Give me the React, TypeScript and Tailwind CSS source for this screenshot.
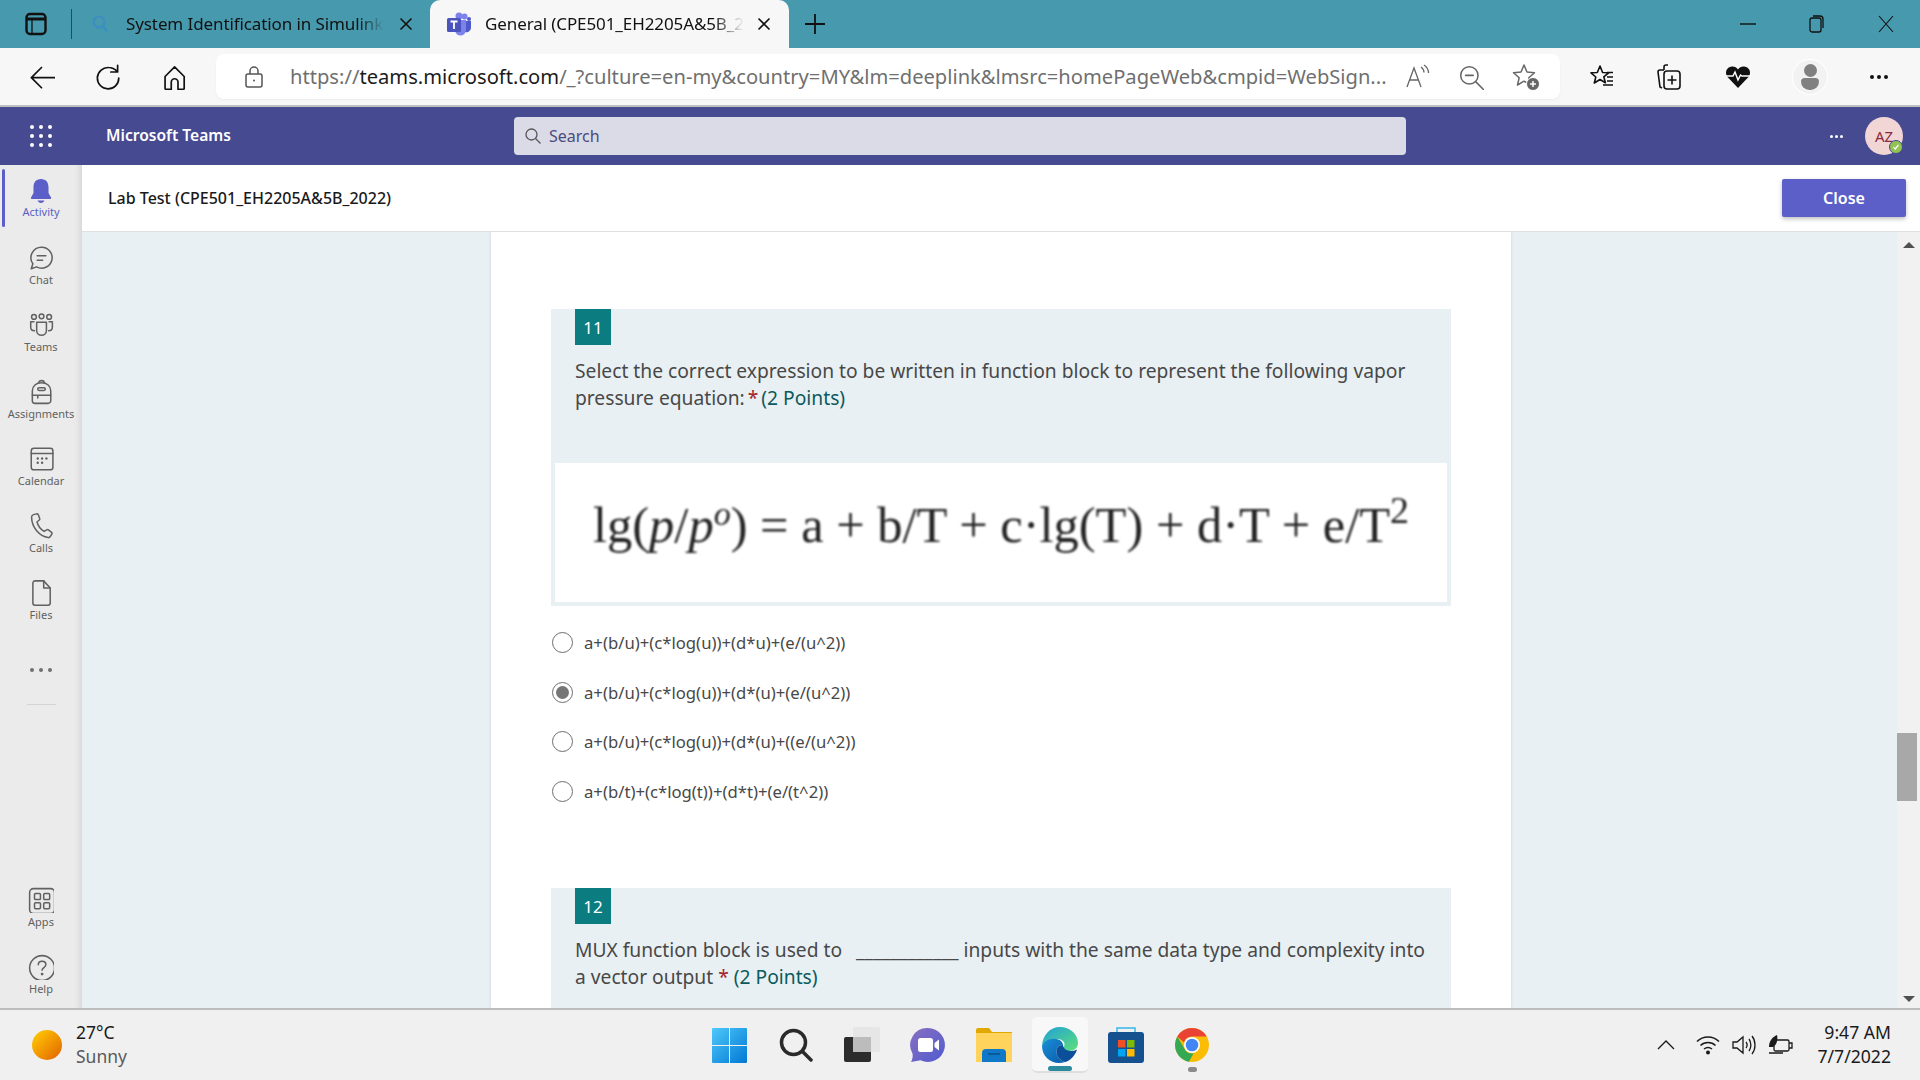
import React from 'react';

const ui = 'font-["Noto_Sans",sans-serif]';

function Ico({ s = 24, children, className = '', vb = 24 }: { s?: number; children: React.ReactNode; className?: string; vb?: number }) {
  return (
    <svg width={s} height={s} viewBox={`0 0 ${vb} ${vb}`} fill="none" stroke="currentColor" strokeWidth="1.4" strokeLinecap="round" strokeLinejoin="round" className={className}>
      {children}
    </svg>
  );
}

const railIcons: Record<string, React.ReactNode> = {
  Activity: (
    <svg width="24" height="26" viewBox="0 0 24 26" fill="#5b5fc7">
      <path d="M12 1c-5 0-7.500 3.600-7.500 8v6L2 19.500c-.4.800.1 1.500 1 1.500h18c.9 0 1.400-.7 1-1.500L19.500 15V9c0-4.400-2.500-8-7.500-8z" />
      <path d="M8.500 22.500h7c-.6 1.500-2 2.500-3.500 2.500s-2.900-1-3.500-2.500z" />
    </svg>
  ),
  Chat: (
    <Ico s={26}>
      <path d="M12.500 2a9.700 9.700 0 1 1-4.600 18.200L3 22l1.500-4.700A9.700 9.700 0 0 1 12.500 2z" />
      <path d="M8.500 10h8M8.500 14h5" />
    </Ico>
  ),
  Teams: (
    <Ico s={26}>
      <circle cx="5.500" cy="4.500" r="2.200" />
      <circle cx="12.500" cy="4" r="2.200" />
      <circle cx="19.500" cy="4.500" r="2.200" />
      <path d="M8 9.500h9v7.500a4.500 4.500 0 0 1-9 0z" />
      <path d="M5.500 9H2.500v5c0 2 1.300 3.200 3.500 3.200M19.500 9h3v5c0 2-1.300 3.200-3.500 3.200" />
    </Ico>
  ),
  Assignments: (
    <Ico s={26}>
      <path d="M10 3.500c0-1.300 1-2 2.500-2s2.500.7 2.500 2" />
      <path d="M4 11c0-4.500 3.500-7.500 8.500-7.500S21 6.500 21 11v9a2.500 2.500 0 0 1-2.500 2.500h-12A2.500 2.500 0 0 1 4 20z" />
      <rect x="9" y="8" width="7" height="2.600" rx="1.300" />
      <path d="M4 15h17M9 15v2.500" />
    </Ico>
  ),
  Calendar: (
    <Ico s={26}>
      <rect x="3" y="2" width="20" height="20" rx="2.500" />
      <path d="M3 7h20" />
      <g fill="currentColor" stroke="none">
        <circle cx="9" cy="11.500" r="1.100" /><circle cx="13" cy="11.500" r="1.100" /><circle cx="17" cy="11.500" r="1.100" />
        <circle cx="9" cy="15.500" r="1.100" /><circle cx="13" cy="15.500" r="1.100" />
      </g>
    </Ico>
  ),
  Calls: (
    <Ico s={26}>
      <path d="M5 1.500 8 .8c.7-.1 1.200.2 1.500.9l1.300 3.300c.2.600 0 1.100-.4 1.500L8.300 8.300c.9 3.300 3.300 6.700 6.500 8.700l2.500-1.500c.5-.3 1.100-.3 1.600.1l2.800 2.300c.5.400.6 1 .3 1.500l-1.500 2.400c-.4.700-1.100 1-1.900.9C10.500 21.500 3.500 13.500 3.300 4c0-1.200.6-2.200 1.700-2.500z" />
    </Ico>
  ),
  Files: (
    <Ico s={26}>
      <path d="M6.500 0.800h8l6 6.500v14a2 2 0 0 1-2 2h-12a2 2 0 0 1-2-2v-18.500a2 2 0 0 1 2-2z" />
      <path d="M14.500 0.800v6.500h6" />
    </Ico>
  ),
  Apps: (
    <Ico s={26}>
      <rect x="1.500" y="1.500" width="23" height="23" rx="3.500" />
      <rect x="6" y="6" width="5.500" height="5.500" rx="1" /><rect x="14.500" y="6" width="5.500" height="5.500" rx="1" />
      <rect x="6" y="14.500" width="5.500" height="5.500" rx="1" /><rect x="14.500" y="14.500" width="5.500" height="5.500" rx="1" />
    </Ico>
  ),
  Help: (
    <Ico s={26}>
      <circle cx="13" cy="13" r="11.500" />
      <path d="M9.500 10c0-2 1.500-3.300 3.500-3.300s3.500 1.300 3.500 3.100c0 2.700-3.500 2.700-3.500 5.200" />
      <circle cx="13" cy="18.500" r=".6" fill="currentColor" />
    </Ico>
  ),
};

function RailItem({ name, active }: { name: string; active?: boolean }) {
  return (
    <div className={`relative h-[67px] flex flex-col items-center pt-[13px] ${active ? 'text-[#5b5fc7]' : 'text-[#616161]'}`}>
      {active && <span className="absolute left-[2px] top-[4px] h-[58px] w-[3px] rounded-full bg-[#5b5fc7]" />}
      <div className="h-[26px] flex items-center justify-center">{railIcons[name]}</div>
      <span className={`text-[11px] leading-[14px] ${active ? 'mt-[1px]' : 'mt-[2px]'}`}>{name}</span>
    </div>
  );
}

function TabClose() {
  return (
    <svg width="14" height="14" viewBox="0 0 14 14" stroke="#111" strokeWidth="1.6" className="shrink-0">
      <path d="M1.500 1.500l11 11M12.500 1.500l-11 11" />
    </svg>
  );
}

function TabBar() {
  return (
    <div className="h-12 bg-[#479aae] flex items-stretch text-[#111]">
      <div className="w-[71px] flex items-center justify-center">
        <svg width="22" height="24" viewBox="0 0 22 24" fill="none" stroke="#111" strokeWidth="2.400">
          <rect x="1.500" y="2" width="19" height="20" rx="3.500" />
          <path d="M1.500 7h19" strokeWidth="3" />
          <path d="M7 7v15" strokeWidth="1.300" />
        </svg>
      </div>
      <div className="w-px h-[30px] self-center bg-[#1f4f5a]" />
      <div className="w-[358px] flex items-center pl-[19px]">
        <svg width="18" height="20" viewBox="0 0 18 20" fill="none" stroke="#3a8fc0" strokeWidth="2.200" className="shrink-0">
          <circle cx="8" cy="8" r="5.500" /><path d="M12 12.500l4 5" />
        </svg>
        <span className="ml-[17px] w-[258px] whitespace-nowrap overflow-hidden text-[17px] tracking-[-0.1px] [mask-image:linear-gradient(to_right,black_90%,transparent)]">System Identification in Simulink</span>
        <span className="ml-[15px]"><TabClose /></span>
      </div>
      <div className="w-[359px] bg-[#f7f7f7] rounded-t-[10px] flex items-center pl-[16px]">
        <svg width="26" height="26" viewBox="0 0 26 26" className="shrink-0">
          <circle cx="18.500" cy="5.500" r="3" fill="#7b83eb" />
          <circle cx="23" cy="8" r="2" fill="#5059c9" />
          <path d="M15 10h10v7a4.500 4.500 0 0 1-7 3.500z" fill="#5059c9" />
          <path d="M9 9h11v10a5.500 5.500 0 0 1-11 0z" fill="#7b83eb" />
          <circle cx="13" cy="5" r="3.500" fill="#7b83eb" />
          <rect x="1" y="7" width="14" height="14" rx="1.500" fill="#4b53bc" />
          <path d="M4.500 10.500h7M8 10.500v7.500" stroke="#fff" strokeWidth="1.800" fill="none" />
        </svg>
        <span className="ml-[13px] w-[259px] whitespace-nowrap overflow-hidden text-[17px] tracking-[-0.1px] [mask-image:linear-gradient(to_right,black_88%,transparent)]">General (CPE501_EH2205A&amp;5B_2022)</span>
        <span className="ml-[13px]"><TabClose /></span>
      </div>
      <div className="ml-[15px] flex items-center">
        <svg width="22" height="22" viewBox="0 0 22 22" stroke="#111" strokeWidth="1.800"><path d="M11 1v20M1 11h20" /></svg>
      </div>
      <div className="ml-auto flex items-center pr-[26px]">
        <svg width="16" height="2" viewBox="0 0 16 2" stroke="#111" strokeWidth="1.400"><path d="M0 1h16" /></svg>
        <svg width="16" height="18" viewBox="0 0 16 18" fill="none" stroke="#111" strokeWidth="1.300" className="ml-[52px]"><rect x="2" y="3" width="11" height="14" rx="2" /><path d="M5 1h7a3 3 0 0 1 3 3v9" /></svg>
        <svg width="16" height="18" viewBox="0 0 16 18" stroke="#111" strokeWidth="1.100" className="ml-[54px]"><path d="M1 1l14 16M15 1L1 17" /></svg>
      </div>
    </div>
  );
}

function AddressBar() {
  return (
    <div className="h-[59px] bg-[#f7f7f7] border-b-2 border-[#bfbfbf] flex items-center text-[#111]">
      <div className="w-[216px] shrink-0 flex items-center pl-[28px] gap-[39px]">
        <Ico s={27}><path d="M24 13H3M12 4l-9 9 9 9" strokeWidth="1.500" /></Ico>
        <Ico s={27}><path d="M22 13.500A9.500 9.500 0 1 1 13 4c3 0 5.400 1.200 7.500 3.500M21 2v6h-6" strokeWidth="1.500" /></Ico>
        <Ico s={27}><path d="M4.500 12 13 3.500 21.500 12v10.500a1 1 0 0 1-1 1H16V17a3 3 0 0 0-6 0v6.500H5.500a1 1 0 0 1-1-1z" strokeWidth="1.500" /></Ico>
      </div>
      <div className="w-[1344px] h-[45px] bg-white rounded-[8px] flex items-center shrink-0 shadow-[0_1px_2px_rgba(0,0,0,0.05)]">
        <svg width="20" height="24" viewBox="0 0 20 24" fill="none" stroke="#555" strokeWidth="1.500" className="ml-[28px] shrink-0">
          <rect x="2" y="9" width="16" height="13" rx="2" />
          <path d="M6 9V6a4 4 0 0 1 8 0v3" />
          <circle cx="10" cy="15.500" r="1" fill="#555" stroke="none" />
        </svg>
        <span className="ml-[26px] text-[20.15px] whitespace-nowrap text-[#6f6f6f]">https://<span className="text-[#1b1b1b]">teams.microsoft.com</span>/_?culture=en-my&amp;country=MY&amp;lm=deeplink&amp;lmsrc=homePageWeb&amp;cmpid=WebSign...</span>
        <div className="ml-auto flex items-center text-[#666] pr-[20px]">
          <svg width="26" height="26" viewBox="0 0 26 26" fill="none" stroke="#666" strokeWidth="1.300">
            <path d="M3 23 10 4l7 19M5.500 16h9M17 3c2 1.500 3 3 3 5.500M20 1c3 2 4.500 4.500 4.500 8" />
          </svg>
          <Ico s={26} className="ml-[28px]"><circle cx="10.500" cy="10.500" r="8" /><path d="M7 10.500h7M16.500 16.500l7 7" /></Ico>
          <svg width="28" height="28" viewBox="0 0 28 28" fill="none" stroke="#666" strokeWidth="1.500" strokeLinejoin="round" className="ml-[28px]">
            <path d="M12 2l3 7 7.500.7-5.700 5 1.700 7.300-6.500-3.800L5.500 22l1.700-7.300-5.700-5L9 9z" />
            <circle cx="21" cy="21" r="6.500" fill="#666" stroke="#fff" strokeWidth="1" />
            <path d="M21 18v6M18 21h6" stroke="#fff" strokeWidth="1.500" />
          </svg>
        </div>
      </div>
      <div className="flex-1 flex items-center pl-[29px]">
        <svg width="26" height="26" viewBox="0 0 26 26" fill="none" stroke="#111" strokeWidth="1.600" strokeLinejoin="round">
          <path d="M11 2l2.600 6.500 6 .3-4.800 4 1.600 6-5.400-3.300L5.300 19l1.500-6L2 8.800l6.300-.3z" />
          <path d="M18 13h6M18 17h6M14 21h10M18 8.500h6" />
        </svg>
        <svg width="26" height="28" viewBox="0 0 26 28" fill="none" stroke="#111" strokeWidth="1.600" className="ml-[41px]">
          <path d="M8 7V4a2 2 0 0 1 2-2h2M6 25l-2-1-2-15a2 2 0 0 1 2-2h4" />
          <rect x="8" y="8" width="16" height="18" rx="3" />
          <path d="M16 12.500v9M11.500 17h9" />
        </svg>
        <svg width="26" height="24" viewBox="0 0 26 24" className="ml-[43px]">
          <path d="M13 23 2.500 12C-.5 8.500 1 2 7 1.500c2.500-.2 4.700 1 6 3 1.300-2 3.500-3.200 6-3C25 2 26.500 8.500 23.500 12z" fill="#111" />
          <path d="M1 11h7l2-4 3 8 2.500-5 1.500 1h9" fill="none" stroke="#fff" strokeWidth="1.500" />
        </svg>
        <div className="ml-[42px] w-[34px] h-[34px] rounded-full bg-[#f2f2f2] ring-1 ring-white flex flex-col items-center justify-center">
          <span className="w-[13px] h-[13px] rounded-full bg-[#808080]" />
          <span className="w-[18px] h-[12px] rounded-t-[4px] rounded-b-[9px] bg-[#808080] mt-[1px]" />
        </div>
        <span className="flex gap-[3px] ml-[43px]">
          <i className="w-[4px] h-[4px] rounded-full bg-[#111]" /><i className="w-[4px] h-[4px] rounded-full bg-[#111]" /><i className="w-[4px] h-[4px] rounded-full bg-[#111]" />
        </span>
      </div>
    </div>
  );
}

function TeamsHeader() {
  return (
    <div className="h-[58px] bg-[#464a91] flex items-center text-white">
      <div className="w-[82px] flex justify-center">
        <div className="grid grid-cols-3 gap-x-[5.500px] gap-y-[5.500px]">
          {Array.from({ length: 9 }).map((_, i) => <span key={i} className="w-[3.500px] h-[3.500px] rounded-full bg-white" />)}
        </div>
      </div>
      <span className="ml-[24px] w-[408px] text-[15.6px] font-semibold">Microsoft Teams</span>
      <div className="w-[892px] h-[38px] bg-[#dbdbe8] rounded-[4px] flex items-center pl-[10px] text-[#4b4b7c]">
        <svg width="18" height="18" viewBox="0 0 18 18" fill="none" stroke="#555" strokeWidth="1.300"><circle cx="7.500" cy="7.500" r="5.500" /><path d="M11.500 11.500l5 5" /></svg>
        <span className="ml-[7px] text-[16px]">Search</span>
      </div>
      <div className="ml-auto flex items-center pr-[17px]">
        <span className="flex gap-[2px] mr-[22px]">
          <i className="w-[3px] h-[3px] rounded-full bg-white" /><i className="w-[3px] h-[3px] rounded-full bg-white" /><i className="w-[3px] h-[3px] rounded-full bg-white" />
        </span>
        <div className="relative w-[38px] h-[38px] rounded-full bg-[#f2d6d6] flex items-center justify-center text-[#8a2a3a] text-[15px]">
          AZ
          <span className="absolute right-0 bottom-[1px] w-[14px] h-[14px] rounded-full bg-[#92c353] border border-[#464a91] flex items-center justify-center">
            <svg width="8" height="8" viewBox="0 0 8 8" fill="none" stroke="#fff" strokeWidth="1.200"><path d="M1.500 4.200 3.200 6l3.300-4" /></svg>
          </span>
        </div>
      </div>
    </div>
  );
}

function Badge({ n }: { n: number }) {
  return <div className="ml-[24px] w-[36px] h-[36px] bg-[#0b7c7f] text-white text-[17px] pt-[1px] flex items-center justify-center">{n}</div>;
}

function Points({ tight }: { tight?: boolean }) {
  return (
    <>
      {' '}<span className={`text-[#a4262c] ${tight ? '-ml-[2px]' : ''}`}>*</span>{' '}
      <span className={`text-[#0b5a5c] ${tight ? '-ml-[2px]' : ''}`}>(2 Points)</span>
    </>
  );
}

function Radio({ checked, label }: { checked?: boolean; label: string }) {
  return (
    <div className="h-[49.5px] flex items-center pl-[1px]">
      <span className="w-[21px] h-[21px] rounded-full border border-[#6e6e6e] bg-white flex items-center justify-center shrink-0">
        {checked && <span className="w-[13px] h-[13px] rounded-full bg-[#767676]" />}
      </span>
      <span className="ml-[11px] text-[16.7px] text-[#484848] whitespace-nowrap">{label}</span>
    </div>
  );
}

function Equation() {
  return (
    <div className="mx-[4px] h-[139px] bg-white flex items-start pl-[38px] pt-[27px] overflow-hidden">
      <p className='blur-[0.8px] text-[#222] text-[50.5px] leading-[70px] whitespace-pre font-["Liberation_Serif",serif]'>
        lg(<i>p</i>/<i>p</i><sup className="text-[34px] leading-[0]"><i>o</i></sup>) = a + b/T + c·lg(T) + d·T + e/T<sup className="text-[38px] leading-[0]">2</sup>
      </p>
    </div>
  );
}

function Form() {
  return (
    <div className="ml-[409px] w-[1020px] bg-white px-[60px] pt-[77px] shadow-[0_0_3px_rgba(0,0,0,0.12)] h-full">
      <div className="bg-[#e8f0f3] pb-[4px]">
        <Badge n={11} />
        <p className="mx-[24px] mt-[12px] mb-[52px] text-[19.23px] leading-[27px] text-[#484848]">
          Select the correct expression to be written in function block to represent the following vapor pressure equation:<Points tight />
        </p>
        <Equation />
      </div>
      <div className="mt-[12px] mb-[72px]">
        <Radio label="a+(b/u)+(c*log(u))+(d*u)+(e/(u^2))" />
        <Radio checked label="a+(b/u)+(c*log(u))+(d*(u)+(e/(u^2))" />
        <Radio label="a+(b/u)+(c*log(u))+(d*(u)+((e/(u^2))" />
        <Radio label="a+(b/t)+(c*log(t))+(d*t)+(e/(t^2))" />
      </div>
      <div className="bg-[#e8f0f3] pb-[40px]">
        <Badge n={12} />
        <p className="mx-[24px] mt-[12px] text-[19.23px] leading-[27px] text-[#484848]">
          MUX function block is used to &nbsp;<span className="ml-[4px]">____________</span> inputs with the same data type and complexity into<br />a vector output<Points />
        </p>
      </div>
    </div>
  );
}

function Scrollbar() {
  return (
    <div className="w-[23px] bg-[#f1f1f1] flex flex-col items-center shrink-0">
      <span className="mt-[10px] w-0 h-0 border-x-[6px] border-x-transparent border-b-[6px] border-b-[#505050]" />
      <span className="mt-[485px] self-start w-[20px] h-[68px] bg-[#a8a8a8]" />
      <span className="mt-auto mb-[6px] w-0 h-0 border-x-[6px] border-x-transparent border-t-[6px] border-t-[#505050]" />
    </div>
  );
}

function Taskbar() {
  return (
    <div className="h-[72px] bg-[#f0f0f0] border-t-2 border-[#bdbdbd] flex items-center relative">
      <div className="flex items-center pl-[32px] w-[680px]">
        <span className="w-[30px] h-[30px] rounded-full bg-gradient-to-br from-[#ffd000] to-[#e05f00]" />
        <div className="ml-[14px] text-[17.5px] leading-[24px] -mt-[2px]">
          <div className="text-[#1a1a1a]">27°C</div>
          <div className="text-[#5a5a5a]">Sunny</div>
        </div>
      </div>
      <div className="flex items-center">
        <svg width="35" height="35" viewBox="0 0 35 35" className="ml-[32px]">
          <defs><linearGradient id="win" x1="0" y1="0" x2="1" y2="1"><stop offset="0" stopColor="#4fc8fb" /><stop offset="1" stopColor="#0078d4" /></linearGradient></defs>
          <path d="M1 0h16v17H0V1a1 1 0 0 1 1-1zM18 0h16a1 1 0 0 1 1 1v16H18zM0 18h17v17H1a1 1 0 0 1-1-1zM18 18h17v16a1 1 0 0 1-1 1H18z" fill="url(#win)" />
        </svg>
        <svg width="34" height="34" viewBox="0 0 34 34" fill="none" stroke="#2a2a2a" strokeWidth="3.500" strokeLinecap="round" className="ml-[32px]">
          <circle cx="14.500" cy="14.500" r="12" /><path d="M24 24l8 8" />
        </svg>
        <svg width="38" height="36" viewBox="0 0 38 36" className="ml-[31px]">
          <rect x="0" y="10" width="27" height="25" rx="2" fill="#2c2c2c" />
          <rect x="9" y="0" width="27" height="25" rx="2" fill="#e6e6e6" />
          <rect x="9" y="10" width="18" height="15" fill="#bcbcbc" />
        </svg>
        <svg width="36" height="36" viewBox="0 0 36 36" className="ml-[28px]">
          <defs><linearGradient id="cht" x1="0" y1="0" x2="1" y2="1"><stop offset="0" stopColor="#8a6fc0" /><stop offset="1" stopColor="#4f5bd0" /></linearGradient></defs>
          <path d="M18 1a17 17 0 1 1-7.500 32.300L1 35c1.500-2.500 2-6 1.500-8.500A17 17 0 0 1 18 1z" fill="url(#cht)" />
          <rect x="8" y="11" width="15" height="14" rx="2.500" fill="#fff" />
          <path d="M24.500 16l4.500-3.500v11L24.500 20z" fill="#fff" />
        </svg>
        <svg width="36" height="34" viewBox="0 0 36 34" className="ml-[30px]">
          <path d="M0 2a2 2 0 0 1 2-2h11l3 4h20v30H0z" fill="#e0a800" />
          <rect x="0" y="5" width="36" height="29" fill="#ffd35c" />
          <path d="M6 34V25a4 4 0 0 1 4-4h16a4 4 0 0 1 4 4v9z" fill="#0f78c9" />
          <path d="M12 26h12" stroke="#0a4f8a" strokeWidth="1.500" />
        </svg>
        <div className="ml-[20px] w-[56px] h-[56px] bg-[#f8f8f8] rounded-[5px] border-b-2 border-[#dedede] relative flex items-start justify-center pt-[9px]">
          <svg width="36" height="38" viewBox="0 0 36 38">
            <defs>
              <linearGradient id="edgeA" x1="0" y1="0" x2="1" y2="1"><stop offset="0" stopColor="#1fa0d8" /><stop offset="1" stopColor="#5ee07a" /></linearGradient>
              <linearGradient id="edgeB" x1="0" y1="0" x2="1" y2="1"><stop offset="0" stopColor="#1a8fd8" /><stop offset="1" stopColor="#0a5ba8" /></linearGradient>
            </defs>
            <path d="M18 1c10 0 18 7 18 16 0 5-4 8-9 8-3 0-6-1-6-3 0-1 1-1 1.500-3 .5-3-2.500-6-7-6C8 13 2 17 0 20 .5 9 8 1 18 1z" fill="url(#edgeA)" />
            <path d="M0 20c2-5 8-8 14-7 4 .6 7 3 7 6-5 0-8 4-6 10 1 3 4 6 8 7-2 .7-4 1-6 1C8 37 0 30 0 20z" fill="url(#edgeB)" />
            <path d="M15 29c-2-6 1-10 6-10 0 2 2 6 8 6 2 0 4-.5 6-1.500C33 31 26 36 23 36c-4-1-7-4-8-7z" fill="#0b4f9a" />
          </svg>
          <span className="absolute left-[16px] bottom-[0px] w-[24px] h-[5px] rounded-full bg-[#2b8a9e]" />
        </div>
        <svg width="36" height="36" viewBox="0 0 36 36" className="ml-[20px]">
          <path d="M9 6V1h18v5" fill="none" stroke="#35b6ea" strokeWidth="1.500" />
          <rect x="0" y="5" width="36" height="31" rx="3" fill="#15508f" />
          <rect x="10" y="13" width="7.500" height="7.500" fill="#f25022" /><rect x="19" y="13" width="7.500" height="7.500" fill="#7fba00" />
          <rect x="10" y="22" width="7.500" height="7.500" fill="#00a4ef" /><rect x="19" y="22" width="7.500" height="7.500" fill="#ffb900" />
        </svg>
        <div className="ml-[31px] relative">
          <svg width="34" height="36" viewBox="0 0 34 34" className="block">
            <circle cx="17" cy="17" r="17" fill="#fbbc04" />
            <path d="M17 0a17 17 0 0 1 14.700 8.500H17a8.500 8.500 0 0 0-8 6L2.300 8.500A17 17 0 0 1 17 0z" fill="#ea4335" />
            <path d="M2.300 8.500 9 20a8.500 8.500 0 0 0 9.500 5.400L14 33.700A17 17 0 0 1 2.300 8.500z" fill="#34a853" />
            <circle cx="17" cy="17" r="8" fill="#fff" />
            <circle cx="17" cy="17" r="6.300" fill="#4285f4" />
          </svg>
          <span className="absolute left-[13px] -bottom-[9px] w-[9px] h-[5px] rounded-full bg-[#8a8a8a]" />
        </div>
      </div>
      <div className="ml-auto flex items-center pr-[29px]">
        <svg width="18" height="10" viewBox="0 0 18 10" fill="none" stroke="#1a1a1a" strokeWidth="1.300"><path d="M1 9l8-8 8 8" /></svg>
        <svg width="24" height="20" viewBox="0 0 24 20" fill="none" stroke="#1a1a1a" strokeWidth="1.500" className="ml-[21px]">
          <path d="M1 6.500c6-6 16-6 22 0M4.500 10.500c4-4 11-4 15 0M8 14c2.500-2 5.500-2 8 0" />
          <circle cx="12" cy="17.500" r="2" fill="#1a1a1a" stroke="none" />
        </svg>
        <svg width="24" height="22" viewBox="0 0 24 22" fill="none" stroke="#1a1a1a" strokeWidth="1.300" className="ml-[12px]">
          <path d="M1 8v6h4l6 5V3L5 8zM14 8c1.500 2 1.500 4 0 6M17 5c2.500 3.500 2.500 8.500 0 12M20 2c4 5 4 13 0 18" />
        </svg>
        <svg width="25" height="22" viewBox="0 0 25 22" fill="none" stroke="#1a1a1a" strokeWidth="1.300" className="ml-[12px]">
          <rect x="6" y="6" width="15" height="11" rx="1.500" /><path d="M21 9h3v5h-3M1 19h14" />
          <path d="M1 13C1 6 5 3 9 1c1 4 0 10-4 12z" fill="#1a1a1a" stroke="none" />
        </svg>
        <div className="ml-[24px] text-right text-[17.6px] leading-[24px] text-[#1a1a1a] w-[74px] -mt-[2px] whitespace-nowrap flex flex-col items-end">
          <div>9:47 AM</div>
          <div>7/7/2022</div>
        </div>
      </div>
    </div>
  );
}

export default function App() {
  return (
    <div className={`w-[1920px] h-[1080px] overflow-hidden flex flex-col ${ui}`}>
      <TabBar />
      <AddressBar />
      <TeamsHeader />
      <div className="flex-1 min-h-0 flex">
        <div className="w-[82px] shrink-0 bg-[#ebebeb] flex flex-col shadow-[inset_-7px_0_6px_-5px_rgba(0,0,0,0.1)]">
          <RailItem name="Activity" active />
          <RailItem name="Chat" />
          <RailItem name="Teams" />
          <RailItem name="Assignments" />
          <RailItem name="Calendar" />
          <RailItem name="Calls" />
          <RailItem name="Files" />
          <div className="h-[71px] flex flex-col items-center pt-[34px] text-[#616161]">
            <span className="flex gap-[5px]">
              <i className="w-[4px] h-[4px] rounded-full bg-[#707070]" /><i className="w-[4px] h-[4px] rounded-full bg-[#707070]" /><i className="w-[4px] h-[4px] rounded-full bg-[#707070]" />
            </span>
            <span className="w-[29px] h-px bg-[#d4d4d4] mt-[32px]" />
          </div>
          <div className="mt-auto">
            <RailItem name="Apps" />
            <RailItem name="Help" />
          </div>
        </div>
        <div className="flex-1 min-w-0 flex flex-col">
          <div className="h-[67px] shrink-0 bg-white border-b border-[#e0e0e0] flex items-center pl-[26px] pr-[14px]">
            <span className="text-[16px] font-medium text-[#1a1a1a]">Lab Test (CPE501_EH2205A&amp;5B_2022)</span>
            <button className="ml-auto w-[124px] h-[38px] bg-[#5b5fc7] rounded-[2px] text-white text-[16px] font-semibold shadow-[0_2px_4px_rgba(0,0,0,0.25)]">Close</button>
          </div>
          <div className="flex-1 min-h-0 flex bg-[#e8f0f3]">
            <div className="flex-1 min-w-0 overflow-hidden">
              <Form />
            </div>
            <Scrollbar />
          </div>
        </div>
      </div>
      <Taskbar />
    </div>
  );
}
